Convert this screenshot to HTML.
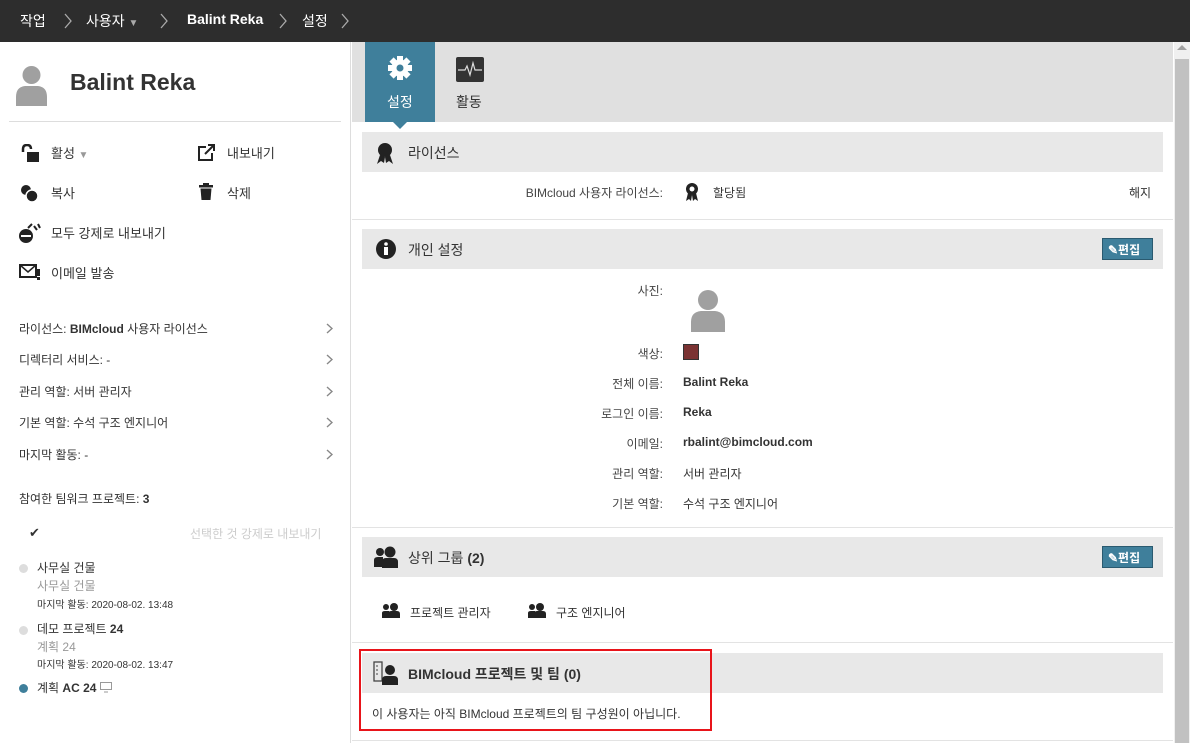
<!DOCTYPE html>
<html><head><meta charset="utf-8"><style>
*{box-sizing:border-box;margin:0;padding:0}
body{width:1190px;height:743px;overflow:hidden;background:#fff;font-family:"Liberation Sans","Noto Sans CJK KR",sans-serif;font-size:13px;color:#333;position:relative}
.abs{position:absolute}
.top{left:0;top:0;width:1190px;height:42px;background:#2d2d2d;color:#fff;font-size:14px}
.top span{position:absolute;top:11px}
.top svg{position:absolute;top:13px}
.left{left:0;top:42px;width:351px;height:701px;border-right:1px solid #ddd}
.gray{color:#999}
.chev{position:absolute;left:326px}
.sec{position:absolute;left:362px;width:801px;height:40px;background:#e8e8e8}
.sec .t{position:absolute;left:46px;top:11px;font-size:14px}
.hr{position:absolute;left:352px;width:821px;height:1px;background:#e3e3e3}
.lbl{position:absolute;right:527px;text-align:right;font-size:12px;color:#444}
.val{position:absolute;left:683px;font-size:12px}
.btn{position:absolute;left:1102px;width:51px;height:22px;background:#3f7f9b;border:1px solid #2a5a70;color:#fff;font-size:12px;font-weight:bold;padding:2px 0 0 5px}
</style></head><body>
<div class="abs top">
<span style="left:20px">작업</span><svg style="left:63px" width="10" height="16"><path d="M2 1L8 8L2 15" stroke="#aaa" stroke-width="1.3" fill="none"/></svg>
<span style="left:86px">사용자 <small style="color:#aaa;font-size:10px">▼</small></span><svg style="left:159px" width="10" height="16"><path d="M2 1L8 8L2 15" stroke="#aaa" stroke-width="1.3" fill="none"/></svg>
<span style="left:187px;font-weight:bold">Balint Reka</span><svg style="left:278px" width="10" height="16"><path d="M2 1L8 8L2 15" stroke="#aaa" stroke-width="1.3" fill="none"/></svg>
<span style="left:302px">설정</span><svg style="left:340px" width="10" height="16"><path d="M2 1L8 8L2 15" stroke="#aaa" stroke-width="1.3" fill="none"/></svg>
</div>
<div class="abs left">
<svg class="abs" style="left:15px;top:22px" width="33" height="42" viewBox="0 0 33 42"><circle cx="16.5" cy="11" r="9" fill="#a0a0a0"/><path d="M1 42 V33 Q1 23 10 22 L23 22 Q32 23 32 33 V42Z" fill="#a0a0a0"/></svg>
<div class="abs" style="left:70px;top:27px;font-size:23px;font-weight:bold;color:#333">Balint Reka</div>
<div class="abs" style="left:9px;top:79px;width:332px;height:1px;background:#ddd"></div>
<svg class="abs" style="left:20px;top:102px" width="20" height="18"><path d="M3 8 V5 Q3 1 7 1 Q11 1 11 5" stroke="#222" stroke-width="2.5" fill="none"/><rect x="7" y="8" width="12" height="10" fill="#222"/></svg>
<div class="abs" style="left:51px;top:101px">활성 <span class="gray" style="font-size:10px">▼</span></div>
<svg class="abs" style="left:198px;top:102px" width="18" height="17"><path d="M8 3H1V16H14V9" stroke="#222" stroke-width="2" fill="none"/><path d="M7 10L16 1M10 1H16V7" stroke="#222" stroke-width="2" fill="none"/></svg>
<div class="abs" style="left:227px;top:101px">내보내기</div>
<svg class="abs" style="left:20px;top:142px" width="20" height="18"><circle cx="6" cy="6" r="5" fill="#222"/><circle cx="12" cy="12" r="6" fill="#222" stroke="#fff" stroke-width="1.5"/></svg>
<div class="abs" style="left:51px;top:141px">복사</div>
<svg class="abs" style="left:199px;top:141px" width="14" height="17"><rect x="0" y="2" width="14" height="2.5" fill="#222"/><rect x="4" y="0" width="6" height="2" fill="#222"/><path d="M1.5 5.5H12.5L11.5 17H2.5Z" fill="#222"/></svg>
<div class="abs" style="left:227px;top:141px">삭제</div>
<svg class="abs" style="left:18px;top:180px" width="24" height="22"><circle cx="8" cy="14" r="7" fill="#222"/><rect x="3" y="13" width="10" height="2" fill="#fff"/><path d="M10 6 L14 2 M16 4 L19 8 M20 2 L22 6" stroke="#222" stroke-width="2"/></svg>
<div class="abs" style="left:51px;top:181px">모두 강제로 내보내기</div>
<svg class="abs" style="left:19px;top:222px" width="22" height="17"><rect x="1" y="1" width="16" height="12" stroke="#222" stroke-width="2" fill="none"/><path d="M1 1L9 8L17 1" stroke="#222" stroke-width="1.5" fill="none"/><rect x="18" y="5" width="3" height="7" fill="#222"/><rect x="18" y="13" width="3" height="3" fill="#222"/></svg>
<div class="abs" style="left:51px;top:221px">이메일 발송</div>
<div class="abs" style="left:19px;top:278px;font-size:12px">라이선스: <b>BIMcloud</b> 사용자 라이선스</div><svg class="chev" style="top:281px" width="7" height="11"><path d="M1 1L6 5.5L1 10" stroke="#888" stroke-width="1.4" fill="none"/></svg>
<div class="abs" style="left:19px;top:309px;font-size:12px">디렉터리 서비스: -</div><svg class="chev" style="top:312px" width="7" height="11"><path d="M1 1L6 5.5L1 10" stroke="#888" stroke-width="1.4" fill="none"/></svg>
<div class="abs" style="left:19px;top:341px;font-size:12px">관리 역할: 서버 관리자</div><svg class="chev" style="top:344px" width="7" height="11"><path d="M1 1L6 5.5L1 10" stroke="#888" stroke-width="1.4" fill="none"/></svg>
<div class="abs" style="left:19px;top:372px;font-size:12px">기본 역할: 수석 구조 엔지니어</div><svg class="chev" style="top:375px" width="7" height="11"><path d="M1 1L6 5.5L1 10" stroke="#888" stroke-width="1.4" fill="none"/></svg>
<div class="abs" style="left:19px;top:404px;font-size:12px">마지막 활동: -</div><svg class="chev" style="top:407px" width="7" height="11"><path d="M1 1L6 5.5L1 10" stroke="#888" stroke-width="1.4" fill="none"/></svg>
<div class="abs" style="left:19px;top:448px;font-size:12px">참여한 팀워크 프로젝트: <b>3</b></div>
<div class="abs" style="left:29px;top:483px;font-size:13px">✔</div>
<div class="abs" style="left:190px;top:483px;font-size:12px;color:#ccc">선택한 것 강제로 내보내기</div>
<div class="abs" style="left:19px;top:522px;width:9px;height:9px;border-radius:50%;background:#ddd"></div>
<div class="abs" style="left:37px;top:517px;font-size:12px">사무실 건물</div>
<div class="abs gray" style="left:37px;top:535px;font-size:12px">사무실 건물</div>
<div class="abs" style="left:37px;top:554px;font-size:10px">마지막 활동: 2020-08-02. 13:48</div>
<div class="abs" style="left:19px;top:584px;width:9px;height:9px;border-radius:50%;background:#ddd"></div>
<div class="abs" style="left:37px;top:578px;font-size:12px">데모 프로젝트 <b>24</b></div>
<div class="abs gray" style="left:37px;top:596px;font-size:12px">계획 24</div>
<div class="abs" style="left:37px;top:614px;font-size:10px">마지막 활동: 2020-08-02. 13:47</div>
<div class="abs" style="left:19px;top:642px;width:9px;height:9px;border-radius:50%;background:#3f7f9b"></div>
<div class="abs" style="left:37px;top:637px;font-size:12px">계획 <b>AC 24</b></div>
<svg class="abs" style="left:100px;top:640px" width="12" height="11"><rect x="0.5" y="0.5" width="11" height="7" stroke="#999" fill="none"/><path d="M4 10H8" stroke="#999"/></svg>
</div>
<div class="abs" style="left:352px;top:42px;width:821px;height:80px;background:#e0e0e0"></div>
<div class="abs" style="left:365px;top:42px;width:70px;height:80px;background:#3f7f9b"></div>
<div class="abs" style="left:393px;top:122px;width:0;height:0;border-left:7px solid transparent;border-right:7px solid transparent;border-top:7px solid #3f7f9b"></div>
<svg class="abs" style="left:387px;top:55px" width="26" height="26" viewBox="0 0 26 26"><g fill="#fff" transform="translate(13 13)"><rect x="-3" y="-12" width="6" height="24"/><rect x="-3" y="-12" width="6" height="24" transform="rotate(45)"/><rect x="-3" y="-12" width="6" height="24" transform="rotate(90)"/><rect x="-3" y="-12" width="6" height="24" transform="rotate(135)"/><circle r="8.5"/></g><circle cx="13" cy="13" r="3.5" fill="#3f7f9b"/></svg>
<div class="abs" style="left:387px;top:92px;color:#fff;font-size:14px">설정</div>
<svg class="abs" style="left:456px;top:57px" width="28" height="25"><rect width="28" height="25" rx="2" fill="#333"/><path d="M2 13H9L11 9L14 18L17 6L19 13H26" stroke="#ddd" stroke-width="1.2" fill="none"/></svg>
<div class="abs" style="left:456px;top:92px;font-size:14px">활동</div>
<div class="abs" style="left:1174px;top:42px;width:16px;height:701px;background:#f0f0f0"></div>
<div class="abs" style="left:1175px;top:59px;width:14px;height:684px;background:#c1c1c1"></div>
<div class="abs" style="left:1177px;top:45px;width:0;height:0;border-left:5px solid transparent;border-right:5px solid transparent;border-bottom:5px solid #a0a0a0"></div>

<div class="sec" style="top:132px"><svg class="abs" style="left:14px;top:10px" width="18" height="22"><circle cx="9" cy="8" r="7" fill="#222"/><path d="M4 13L1 22L5 19L8 21L9 15M14 13L17 22L13 19L10 21L9 15" fill="#222"/></svg><div class="t">라이선스</div></div>
<div class="lbl" style="top:184px">BIMcloud 사용자 라이선스:</div>
<svg class="abs" style="left:684px;top:182px" width="16" height="19"><circle cx="8" cy="7" r="6" fill="#222"/><circle cx="8" cy="7" r="2.5" fill="#fff"/><path d="M4 11L2 19L5 17L7 19L8 13M12 11L14 19L11 17L9 19L8 13" fill="#222"/></svg>
<div class="val" style="left:713px;top:184px">할당됨</div>
<div class="abs" style="left:1129px;top:184px;font-size:12px">해지</div>
<div class="hr" style="top:219px"></div>

<div class="sec" style="top:229px"><svg class="abs" style="left:13px;top:9px" width="22" height="22"><circle cx="11" cy="11" r="10" fill="#222"/><circle cx="11" cy="6" r="1.8" fill="#fff"/><rect x="9" y="9" width="4" height="8" fill="#fff"/></svg><div class="t">개인 설정</div><div class="btn" style="left:740px;top:9px">✎편집</div></div>
<div class="lbl" style="top:282px">사진:</div>
<svg class="abs" style="left:690px;top:288px" width="36" height="44"><circle cx="18" cy="12" r="10" fill="#a0a0a0"/><path d="M1 44V34Q1 24 11 23H25Q35 24 35 34V44Z" fill="#a0a0a0"/></svg>
<div class="lbl" style="top:345px">색상:</div>
<div class="abs" style="left:683px;top:344px;width:16px;height:16px;background:#7b3333;border:1px solid #333"></div>
<div class="lbl" style="top:375px">전체 이름:</div><div class="val" style="top:375px;font-weight:bold">Balint Reka</div>
<div class="lbl" style="top:405px">로그인 이름:</div><div class="val" style="top:405px;font-weight:bold">Reka</div>
<div class="lbl" style="top:435px">이메일:</div><div class="val" style="top:435px;font-weight:bold">rbalint@bimcloud.com</div>
<div class="lbl" style="top:465px">관리 역할:</div><div class="val" style="top:465px">서버 관리자</div>
<div class="lbl" style="top:495px">기본 역할:</div><div class="val" style="top:495px">수석 구조 엔지니어</div>
<div class="hr" style="top:527px"></div>

<div class="sec" style="top:537px"><svg class="abs" style="left:12px;top:9px" width="26" height="22"><circle cx="6" cy="6" r="4" fill="#222"/><path d="M0 21V14Q0 11 4 11H9V21Z" fill="#222"/><circle cx="16" cy="6" r="5.5" fill="#222"/><path d="M8 22V16Q8 12 12 12H20Q24 12 24 16V22Z" fill="#222"/></svg><div class="t">상위 그룹 <b>(2)</b></div><div class="btn" style="left:740px;top:9px">✎편집</div></div>
<svg class="abs" style="left:382px;top:603px" width="18" height="15"><circle cx="4" cy="4" r="3" fill="#222"/><path d="M0 15V10Q0 8 3 8H7V15Z" fill="#222"/><circle cx="12" cy="4" r="4" fill="#222"/><path d="M6 15V11Q6 8 9 8H15Q18 8 18 11V15Z" fill="#222"/></svg>
<div class="abs" style="left:410px;top:604px;font-size:12px">프로젝트 관리자</div>
<svg class="abs" style="left:528px;top:603px" width="18" height="15"><circle cx="4" cy="4" r="3" fill="#222"/><path d="M0 15V10Q0 8 3 8H7V15Z" fill="#222"/><circle cx="12" cy="4" r="4" fill="#222"/><path d="M6 15V11Q6 8 9 8H15Q18 8 18 11V15Z" fill="#222"/></svg>
<div class="abs" style="left:556px;top:604px;font-size:12px">구조 엔지니어</div>
<div class="hr" style="top:642px"></div>

<div class="sec" style="top:653px"><svg class="abs" style="left:11px;top:8px" width="26" height="24"><rect x="1" y="1" width="8" height="19" stroke="#444" stroke-width="1.3" fill="none"/><path d="M3 5h2M3 9h2M3 13h2" stroke="#444"/><circle cx="17" cy="9" r="5" fill="#222"/><path d="M9 24V19Q9 15 13 15H21Q25 15 25 19V24Z" fill="#222"/></svg><div class="t" style="font-weight:bold">BIMcloud 프로젝트 및 팀 (0)</div></div>
<div class="abs" style="left:372px;top:705px;font-size:12px">이 사용자는 아직 BIMcloud 프로젝트의 팀 구성원이 아닙니다.</div>
<div class="hr" style="top:740px"></div>
<div class="abs" style="left:359px;top:649px;width:353px;height:82px;border:2px solid #e8141a"></div>
</body></html>
